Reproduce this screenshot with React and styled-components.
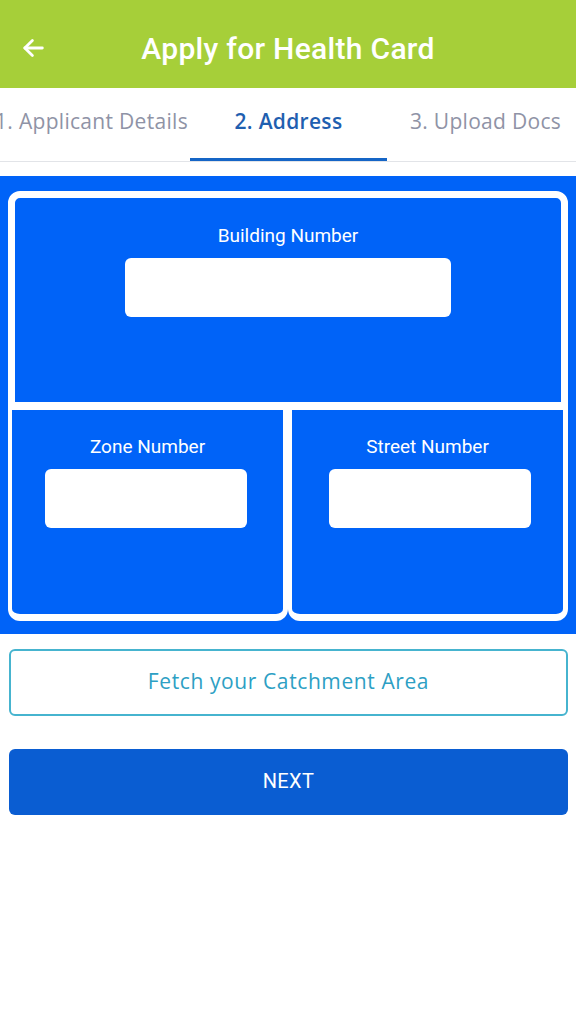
import React from 'react';
import styled, { createGlobalStyle } from 'styled-components';

const GlobalStyle = createGlobalStyle`
  html, body {
    margin: 0;
    padding: 0;
    background: #ffffff;
  }
  body {
    font-family: Roboto, "Liberation Sans", Arial, sans-serif;
    overflow: hidden;
  }
  * {
    box-sizing: border-box;
  }
`;

// Page shell
const Screen = styled.div`
  width: 576px;
  min-height: 1024px;
  background: #ffffff;
  display: flex;
  flex-direction: column;
`;

// Green app bar
const AppBar = styled.header`
  height: 88px;
  background: #a6cf39;
  display: flex;
  align-items: center;
  padding: 8px 18px 0;
`;

const BackButton = styled.button`
  border: none;
  background: transparent;
  padding: 0;
  width: 30px;
  height: 30px;
  display: flex;
  align-items: center;
  justify-content: center;
  color: #ffffff;
`;

const Title = styled.h1`
  flex: 1;
  margin: 0 0 0 -30px;
  text-align: center;
  color: #ffffff;
  font-family: Roboto, "Liberation Sans", sans-serif;
  font-weight: 500;
  font-size: 30px;
  letter-spacing: 0.3px;
`;

// Step tabs
const TabBar = styled.nav`
  height: 74px;
  display: flex;
  overflow: hidden;
  border-bottom: 1px solid #e2e4e8;
`;

const TabTrack = styled.div`
  display: flex;
  margin-left: -7px;
`;

const Tab = styled.div`
  width: 197px;
  flex-shrink: 0;
  display: flex;
  align-items: center;
  justify-content: center;
  padding-bottom: 4px;
  font-family: "Open Sans", "Noto Sans", sans-serif;
  font-size: 21px;
  letter-spacing: 0.3px;
  white-space: nowrap;
  color: ${p => (p.$active ? '#1f5fb0' : '#8f93a6')};
  font-weight: ${p => (p.$active ? 600 : 400)};
  border-bottom: 3px solid ${p => (p.$active ? '#1565c6' : 'transparent')};
`;

// Blue address form panel
const FormPanel = styled.section`
  margin-top: 14px;
  background: #0063f8;
  padding: 15px 8px 13px;
  display: grid;
  grid-template-columns: 1fr 1fr;
`;

const Block = styled.div`
  grid-column: ${p => (p.$wide ? '1 / span 2' : 'auto')};
  height: ${p => (p.$wide ? '219px' : '211px')};
  border: 6px solid #ffffff;
  border-width: ${p => (p.$wide ? '7px 7px 8px 7px' : '0 5px 7px 4px')};
  border-radius: ${p => (p.$wide ? '12px 12px 0 0' : '0 0 12px 12px')};
  display: flex;
  flex-direction: column;
  align-items: center;
  padding-top: ${p => (p.$wide ? '26px' : '25px')};
`;

const Label = styled.label`
  color: #ffffff;
  font-family: Roboto, "Liberation Sans", sans-serif;
  font-size: 19px;
  line-height: 24px;
  margin-bottom: 10px;
`;

const Field = styled.input`
  width: ${p => (p.$wide ? '326px' : '202px')};
  height: 59px;
  margin-left: ${p => p.$shift || 0}px;
  border: none;
  border-radius: 6px;
  background: #ffffff;
  outline: none;
`;

// Action buttons
const Actions = styled.div`
  padding: 15px 8px 0 9px;
  display: flex;
  flex-direction: column;
  gap: 33px;
`;

const OutlineButton = styled.button`
  height: 67px;
  padding-bottom: 4px;
  border: 2px solid #46b4cf;
  border-radius: 6px;
  background: #ffffff;
  color: #2d9fc4;
  font-family: "Open Sans", "Noto Sans", sans-serif;
  font-size: 21px;
  font-weight: 500;
  letter-spacing: 0.6px;
`;

const PrimaryButton = styled.button`
  height: 66px;
  padding-bottom: 4px;
  border: none;
  border-radius: 6px;
  background: #0a5dd2;
  color: #ffffff;
  font-family: Roboto, "Liberation Sans", sans-serif;
  font-size: 20px;
  font-weight: 400;
  letter-spacing: 0.4px;
`;

const ArrowLeft = () => (
  <svg width="28" height="28" viewBox="0 0 24 24" fill="none" stroke="currentColor" strokeWidth="2.4" strokeLinecap="round" strokeLinejoin="round">
    <path d="M20 12H5" />
    <path d="M11.5 5.5L5 12l6.5 6.5" />
  </svg>
);

export default function App() {
  return (
    <Screen>
      <GlobalStyle />
      <AppBar>
        <BackButton aria-label="Back">
          <ArrowLeft />
        </BackButton>
        <Title>Apply for Health Card</Title>
      </AppBar>

      <TabBar>
        <TabTrack>
          <Tab>1. Applicant Details</Tab>
          <Tab $active>2. Address</Tab>
          <Tab>3. Upload Docs</Tab>
        </TabTrack>
      </TabBar>

      <FormPanel>
        <Block $wide>
          <Label>Building Number</Label>
          <Field $wide />
        </Block>
        <Block>
          <Label>Zone Number</Label>
          <Field $shift={-3} />
        </Block>
        <Block>
          <Label>Street Number</Label>
          <Field $shift={5} />
        </Block>
      </FormPanel>

      <Actions>
        <OutlineButton>Fetch your Catchment Area</OutlineButton>
        <PrimaryButton>NEXT</PrimaryButton>
      </Actions>
    </Screen>
  );
}
